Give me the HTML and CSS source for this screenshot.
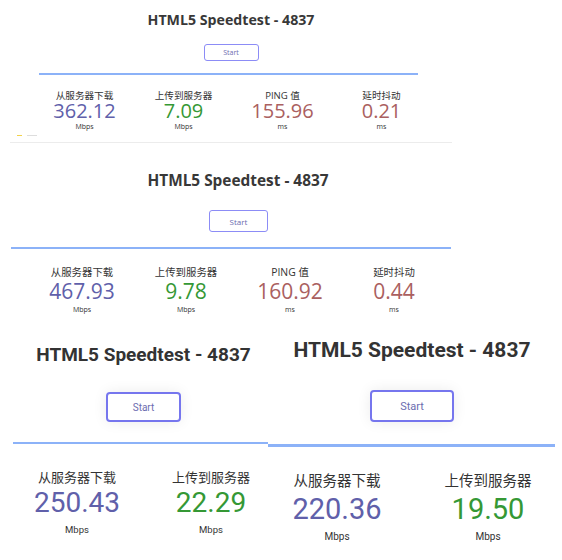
FILE: index.html
```html
<!DOCTYPE html>
<html lang="zh-CN">
<head>
  <meta charset="UTF-8" />
  <title>HTML5 Speedtest - 4837</title>
  <link rel="stylesheet" href="styles.css">
</head>
<body>

<div class="collage">

  <div class="shot s1">
    <h1>HTML5 Speedtest - 4837</h1>
    <div class="start-btn">Start</div>
    <div class="bar"></div>
    <div class="tests">
      <div class="test">
        <div class="label">从服务器下载</div>
        <div class="value dl">362.12</div>
        <div class="unit">Mbps</div>
      </div>
      <div class="test">
        <div class="label">上传到服务器</div>
        <div class="value ul">7.09</div>
        <div class="unit">Mbps</div>
      </div>
      <div class="test">
        <div class="label">PING 值</div>
        <div class="value ping">155.96</div>
        <div class="unit">ms</div>
      </div>
      <div class="test">
        <div class="label">延时抖动</div>
        <div class="value ping">0.21</div>
        <div class="unit">ms</div>
      </div>
    </div>
    <div class="foot"><span class="mark"></span><span class="dash"></span></div>
  </div>

  <div class="shot s2">
    <h1>HTML5 Speedtest - 4837</h1>
    <div class="start-btn">Start</div>
    <div class="bar"></div>
    <div class="tests">
      <div class="test">
        <div class="label">从服务器下载</div>
        <div class="value dl">467.93</div>
        <div class="unit">Mbps</div>
      </div>
      <div class="test">
        <div class="label">上传到服务器</div>
        <div class="value ul">9.78</div>
        <div class="unit">Mbps</div>
      </div>
      <div class="test">
        <div class="label">PING 值</div>
        <div class="value ping">160.92</div>
        <div class="unit">ms</div>
      </div>
      <div class="test">
        <div class="label">延时抖动</div>
        <div class="value ping">0.44</div>
        <div class="unit">ms</div>
      </div>
    </div>
  </div>

  <div class="row">
    <div class="shot s3">
      <h1>HTML5 Speedtest - 4837</h1>
      <div class="start-btn">Start</div>
      <div class="bar"></div>
      <div class="tests">
        <div class="test">
          <div class="label">从服务器下载</div>
          <div class="value dl">250.43</div>
          <div class="unit">Mbps</div>
        </div>
        <div class="test">
          <div class="label">上传到服务器</div>
          <div class="value ul">22.29</div>
          <div class="unit">Mbps</div>
        </div>
      </div>
    </div>

    <div class="shot s4">
      <h1>HTML5 Speedtest - 4837</h1>
      <div class="start-btn">Start</div>
      <div class="bar"></div>
      <div class="tests">
        <div class="test">
          <div class="label">从服务器下载</div>
          <div class="value dl">220.36</div>
          <div class="unit">Mbps</div>
        </div>
        <div class="test">
          <div class="label">上传到服务器</div>
          <div class="value ul">19.50</div>
          <div class="unit">Mbps</div>
        </div>
      </div>
    </div>
  </div>

</div>

</body>
</html>
```

FILE: styles.css
```css
body {
  margin: 0;
  background: #fff;
  color: #333;
  font-family: "Open Sans", "Noto Sans CJK SC", sans-serif;
  overflow: hidden;
}
.collage {
  width: 562px;
  height: 560px;
}
.shot {
  overflow: hidden;
}
.shot h1 {
  margin: 0;
  text-align: center;
  font-weight: 700;
  color: #383838;
}
.start-btn {
  margin: 0 auto;
  box-sizing: border-box;
  display: flex;
  align-items: center;
  justify-content: center;
  border: 1.5px solid #8c8cf6;
  border-radius: 3px;
  color: #6c6cb0;
}
.bar {
  background: #8cb2f8;
}
.tests {
  display: flex;
}
.test {
  text-align: center;
  flex: none;
}
.label {
  color: #333;
  white-space: nowrap;
}
.value {
  white-space: nowrap;
}
.value.dl { color: #6060aa; }
.value.ul { color: #359835; }
.value.ping { color: #aa6060; }
.unit {
  color: #333;
}

/* shot 1 */
.s1 {
  margin-left: 10px;
  width: 442px;
  height: 143px;
  box-sizing: border-box;
  border-bottom: 1px solid #ececec;
}
.s1 h1 {
  padding-top: 10px;
  font-size: 14.2px;
  line-height: 20px;
}
.s1 .start-btn {
  margin-top: 14px;
  width: 55px;
  height: 17px;
  font-size: 7px;
}
.s1 .bar {
  margin: 12px 34px 0 29px;
  height: 2px;
}
.s1 .tests {
  padding-left: 25px;
  margin-top: 15px;
}
.s1 .test { width: 99px; }
.s1 .label { font-size: 9.6px; line-height: 11px; }
.s1 .value { font-size: 20px; line-height: 18px; margin-top: 1px; }
.s1 .unit { font-size: 7px; line-height: 9px; margin-top: 2px; }
.s1 .foot {
  display: flex;
  gap: 5px;
  padding: 4px 0 0 7px;
}
.s1 .mark {
  width: 5px;
  height: 1px;
  background: #f2d24a;
}
.s1 .dash {
  width: 10px;
  height: 1px;
  background: #ddd;
}

/* shot 2 */
.s2 {
  margin-left: 10px;
  width: 442px;
  height: 187px;
}
.s2 h1 {
  padding: 27px 0 0 14px;
  font-size: 15.4px;
  line-height: 22px;
}
.s2 .start-btn {
  margin: 18px 0 0 199px;
  width: 59px;
  height: 22px;
  font-size: 8px;
}
.s2 .bar {
  margin: 15px 1px 0 1px;
  height: 2px;
}
.s2 .tests {
  padding-left: 20px;
  margin-top: 16px;
}
.s2 .test { width: 104px; }
.s2 .label { font-size: 10.4px; line-height: 14px; }
.s2 .value { font-size: 21px; line-height: 24px; }
.s2 .unit { font-size: 7px; line-height: 10px; margin-top: 2px; }

/* shots 3 and 4, phone captures */
.row {
  display: flex;
}
.s3, .s4 {
  font-family: Roboto, "Noto Sans CJK SC", sans-serif;
  height: 230px;
}
.s3 h1, .s4 h1 {
  color: #333;
}
.s3 .start-btn, .s4 .start-btn {
  border-width: 2px;
  border-color: #7676ee;
  border-radius: 4px;
  box-shadow: 0 0 14px rgba(0, 0, 0, 0.08);
}
.s3 {
  width: 268px;
}
.s3 h1 {
  padding: 12px 0 0 19px;
  font-size: 19px;
  line-height: 26px;
}
.s3 .start-btn {
  margin: 24px 0 0 106px;
  width: 75px;
  height: 30px;
  font-size: 10px;
}
.s3 .bar {
  margin: 20px 0 0 13px;
  height: 2px;
}
.s3 .tests {
  padding-left: 10px;
  margin-top: 25px;
}
.s3 .test { width: 134px; }
.s3 .label { font-size: 13px; line-height: 18px; }
.s3 .value { font-size: 28px; line-height: 32px; }
.s3 .unit { font-size: 9.5px; line-height: 12px; margin-top: 5px; }

.s4 {
  width: 294px;
}
.s4 h1 {
  padding: 6px 6px 0 0;
  font-size: 21px;
  line-height: 28px;
}
.s4 .start-btn {
  margin: 26px 0 0 102px;
  width: 84px;
  height: 32px;
  font-size: 11px;
}
.s4 .bar {
  margin: 22px 7px 0 0;
  height: 2.5px;
}
.s4 .tests {
  gap: 13px;
  margin-top: 25px;
}
.s4 .test { width: 138px; }
.s4 .label { font-size: 14.5px; line-height: 20px; }
.s4 .value { font-size: 29px; line-height: 34px; }
.s4 .unit { font-size: 10px; line-height: 12px; margin-top: 5px; }
```
